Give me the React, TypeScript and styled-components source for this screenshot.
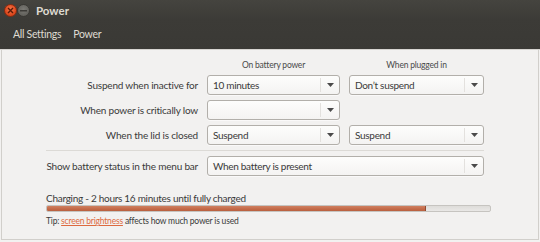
import React from "react";
import styled, { createGlobalStyle } from "styled-components";

const Global = createGlobalStyle`
  html, body { margin: 0; padding: 0; background: #f2f1f0; }
  body { font-family: Lato, "Open Sans", sans-serif; }
  * { box-sizing: border-box; }
`;

const Window = styled.div`
  width: 540px;
  height: 242px;
  display: flex;
  flex-direction: column;
  background: #f2f1f0;
  overflow: hidden;
`;

const Header = styled.div`
  background: linear-gradient(#45443f, #3c3b37 40%, #3a3935);
  height: 50px;
  display: flex;
  flex-direction: column;
  border-bottom: 1px solid #d6d4d0;
`;

const TitleBar = styled.div`
  height: 20px;
  display: flex;
  align-items: center;
  padding-left: 4px;
`;

const WinButton = styled.div<{ $kind: "close" | "min" }>`
  width: 13px;
  height: 13px;
  border-radius: 50%;
  display: flex;
  align-items: center;
  justify-content: center;
  background: ${(p) =>
    p.$kind === "close"
      ? "radial-gradient(circle at 50% 40%, #f37a4d, #df4a1f 60%, #b83a17)"
      : "radial-gradient(circle at 50% 40%, #7b7a75, #62615c 70%, #54534e)"};
  border: 1px solid ${(p) => (p.$kind === "close" ? "#8a2c12" : "#3a3935")};
`;

const Title = styled.div`
  margin-left: 6px;
  color: #dfdbd2;
  font-weight: bold;
  font-size: 11.5px;
`;

const Toolbar = styled.div`
  flex: 1;
  display: flex;
  align-items: center;
  padding-left: 13px;
  gap: 12px;
  padding-bottom: 2px;
`;

const ToolbarItem = styled.div`
  color: #dfdbd2;
  font-size: 10.5px;
  letter-spacing: -0.3px;
`;

const Content = styled.div`
  flex: 1;
  border: 1px solid #d1cfcb;
  border-top: none;
  margin: 0 1px 2px 1px;
  padding: 9px 0 0 44px;
  display: flex;
  flex-direction: column;
`;

const Grid = styled.div`
  display: grid;
  grid-template-columns: 152px 133px 135px;
  column-gap: 9px;
  row-gap: 5px;
  align-items: center;
  width: 447px;
`;

const ColHeader = styled.div`
  text-align: center;
  font-size: 8.5px;
  letter-spacing: -0.2px;
  color: #4a4a4a;
  height: 12px;
  line-height: 12px;
  margin-bottom: -1px;
`;

const Label = styled.div`
  text-align: right;
  font-size: 10px;
  letter-spacing: -0.2px;
  color: #3a3a3a;
  white-space: nowrap;
`;

const Combo = styled.div<{ $span?: number }>`
  grid-column: span ${(p) => p.$span ?? 1};
  height: 20px;
  border: 1px solid #b2afaa;
  border-radius: 3px;
  background: linear-gradient(#fdfdfc, #f4f3f2);
  box-shadow: 0 1px 0 rgba(255, 255, 255, 0.6);
  display: flex;
  align-items: center;
  font-size: 10px;
  letter-spacing: -0.3px;
  color: #3a3a3a;
`;

const ComboText = styled.div`
  flex: 1;
  padding-left: 5px;
  white-space: nowrap;
  overflow: hidden;
`;

const ComboArrow = styled.div`
  width: 19px;
  height: 14px;
  border-left: 1px solid #e3e1de;
  display: flex;
  align-items: center;
  justify-content: center;
`;

const Separator = styled.div`
  grid-column: 1 / -1;
  height: 1px;
  background: #dcdad6;
`;

const Status = styled.div`
  margin-top: 16px;
  font-size: 10px;
  letter-spacing: -0.28px;
  color: #3a3a3a;
  line-height: 12px;
`;

const Track = styled.div`
  margin-top: 1px;
  width: 445px;
  height: 7px;
  border: 1px solid #c6c4c0;
  border-radius: 2px;
  background: linear-gradient(#dedcd9, #e9e8e6);
  overflow: hidden;
`;

const Fill = styled.div`
  height: 100%;
  background: linear-gradient(#cf8061, #c46a48 60%, #b8603f);
  border-right: 1px solid #8e4a33;
`;

const Tip = styled.div`
  margin-top: 4px;
  font-size: 8.5px;
  letter-spacing: -0.2px;
  color: #3a3a3a;
`;

const TipLink = styled.span`
  color: #dd6a3f;
  text-decoration: underline;
`;

const Arrow = () => (
  <svg width="7" height="4" viewBox="0 0 7 4">
    <path d="M0 0 L7 0 L3.5 4 Z" fill="#4a4a4a" />
  </svg>
);

const Select = ({ value, span }: { value: string; span?: number }) => (
  <Combo $span={span}>
    <ComboText>{value}</ComboText>
    <ComboArrow>
      <Arrow />
    </ComboArrow>
  </Combo>
);

const Empty = styled.div``;

const progress = 0.856;

export default function App() {
  return (
    <Window>
      <Global />
      <Header>
        <TitleBar>
          <WinButton $kind="close">
            <svg width="7" height="7" viewBox="0 0 7 7">
              <path d="M1 1 L6 6 M6 1 L1 6" stroke="#5a1a08" strokeWidth="1.4" />
            </svg>
          </WinButton>
          <WinButton $kind="min">
            <svg width="7" height="3" viewBox="0 0 7 3">
              <rect x="0" y="1" width="7" height="1.5" fill="#3c3b37" />
            </svg>
          </WinButton>
          <Title>Power</Title>
        </TitleBar>
        <Toolbar>
          <ToolbarItem>All Settings</ToolbarItem>
          <ToolbarItem>Power</ToolbarItem>
        </Toolbar>
      </Header>
      <Content>
        <Grid>
          <Empty />
          <ColHeader>On battery power</ColHeader>
          <ColHeader>When plugged in</ColHeader>

          <Label>Suspend when inactive for</Label>
          <Select value="10 minutes" />
          <Select value="Don’t suspend" />

          <Label>When power is critically low</Label>
          <Select value="" />
          <Empty />

          <Label>When the lid is closed</Label>
          <Select value="Suspend" />
          <Select value="Suspend" />

          <Separator />

          <Label>Show battery status in the menu bar</Label>
          <Select value="When battery is present" span={2} />
        </Grid>
        <Status>Charging - 2 hours 16 minutes until fully charged</Status>
        <Track>
          <Fill style={{ width: `${progress * 100}%` }} />
        </Track>
        <Tip>
          Tip: <TipLink>screen brightness</TipLink> affects how much power is used
        </Tip>
      </Content>
    </Window>
  );
}
